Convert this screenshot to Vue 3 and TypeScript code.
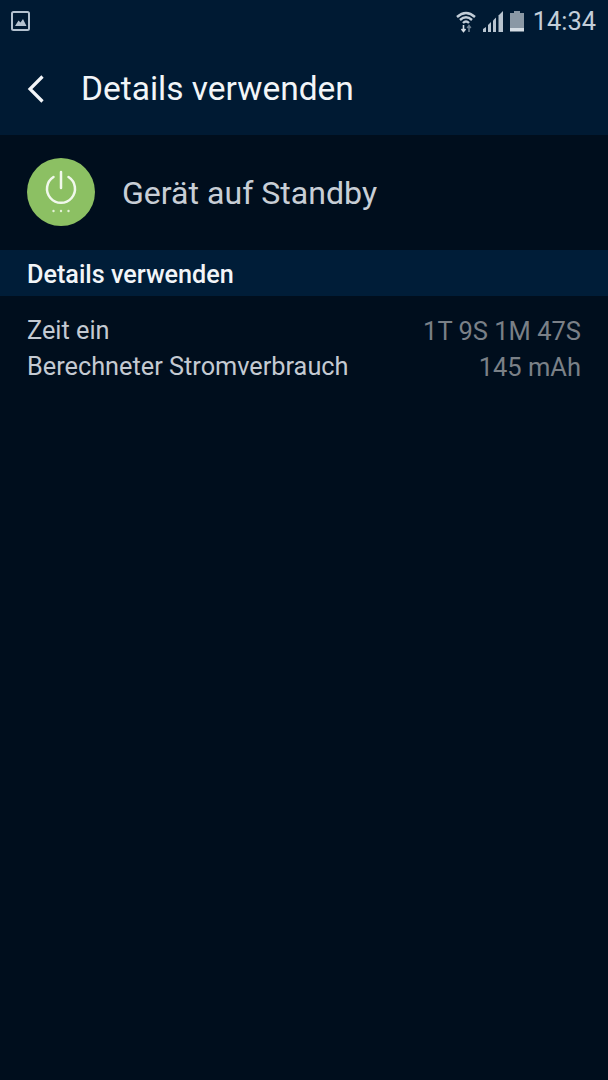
<script setup lang="ts">
const rows: { label: string; value: string }[] = [
  { label: 'Zeit ein', value: '1T 9S 1M 47S' },
  { label: 'Berechneter Stromverbrauch', value: '145 mAh' },
]
</script>

<template>
  <div class="page">
    <header class="top">
      <div class="status">
        <svg class="pic" width="20" height="21" viewBox="0 0 20 21">
          <rect x="1" y="1" width="17" height="18" rx="1.5" fill="none" stroke="#b4c2d0" stroke-width="2" />
          <path d="M4 15 L7.5 9.5 L9.5 11.5 L12 8 L15.500 15 Z" fill="#b4c2d0" />
        </svg>
        <div class="status-right">
          <svg width="22" height="24" viewBox="0 0 22 24">
            <path d="M2 8 Q11 0 20 8" fill="none" stroke="#c2cdd8" stroke-width="2.400" />
            <path d="M5 11 Q11 5.500 17 11" fill="none" stroke="#c2cdd8" stroke-width="2.400" />
            <path d="M8 14 Q11 11 14 14" fill="none" stroke="#c2cdd8" stroke-width="2.400" />
            <path d="M8.500 16 L8.500 22 M6.500 20 L8.500 22.500 L10.500 20" fill="none" stroke="#d4dce4" stroke-width="1.600" />
            <path d="M14 23 L14 17 M12.200 19 L14 16.500 L15.800 19" fill="none" stroke="#6d7f90" stroke-width="1.600" />
          </svg>
          <svg class="sig" width="21" height="22" viewBox="0 0 21 22">
            <path d="M0 19 L3 17 L3 22 L0 22 Z" fill="#b8c4d0" />
            <path d="M5 15 L8 12 L8 22 L5 22 Z" fill="#b8c4d0" />
            <path d="M10 10.500 L13 7.500 L13 22 L10 22 Z" fill="#b8c4d0" />
            <path d="M15.500 5.500 L20 1 L20 22 L15.500 22 Z" fill="#b8c4d0" />
          </svg>
          <svg class="bat" width="14" height="21" viewBox="0 0 14 21">
            <rect x="4" y="0" width="6" height="2" fill="#8a98a5" />
            <rect x="0" y="2" width="14" height="15" fill="#8a98a5" />
            <rect x="0" y="17" width="14" height="3.500" fill="#d5dde4" />
          </svg>
          <span class="time">14:34</span>
        </div>
      </div>
      <div class="bar">
        <svg class="back" width="20" height="30" viewBox="0 0 20 30">
          <path d="M17.500 2.500 L5 15 L17.500 27.500" fill="none" stroke="#f2f5f8" stroke-width="3.200" />
        </svg>
        <h1 class="title">Details verwenden</h1>
      </div>
    </header>

    <section class="app-row">
      <div class="circle">
        <svg width="36" height="44" viewBox="0 0 36 44">
          <path d="M10.500 7 A14 14 0 1 0 25.500 7" fill="none" stroke="#f1f8ec" stroke-width="2.500" stroke-linecap="round" />
          <path d="M18 2 L18 18" stroke="#f1f8ec" stroke-width="2.500" stroke-linecap="round" />
          <circle cx="10.500" cy="41" r="1.200" fill="#e4f2d8" />
          <circle cx="18" cy="41" r="1.200" fill="#e4f2d8" />
          <circle cx="25.500" cy="41" r="1.200" fill="#e4f2d8" />
        </svg>
      </div>
      <span class="app-name">Gerät auf Standby</span>
    </section>

    <h2 class="section">Details verwenden</h2>

    <div class="rows">
      <div v-for="row in rows" :key="row.label" class="row">
        <span class="label">{{ row.label }}</span>
        <span class="value">{{ row.value }}</span>
      </div>
    </div>
  </div>
</template>

<style>
html, body { margin: 0; background: #000e1d; }
</style>

<style scoped>
.page {
  width: 608px;
  height: 1080px;
  overflow: hidden;
  background: #000e1d;
  font-family: Roboto, "Liberation Sans", sans-serif;
}
.top {
  height: 135px;
  background: #001a33;
  display: flex;
  flex-direction: column;
}
.status {
  height: 42px;
  display: flex;
  align-items: center;
  justify-content: space-between;
  padding: 0 12px 0 11px;
}
.status-right {
  display: flex;
  align-items: center;
  gap: 5px;
}
.sig { margin-left: 1px; }
.bat { margin-left: 1px; }
.time {
  font-size: 25.400px;
  color: #c3ced9;
  margin-left: 4px;
}
.bar {
  flex: 1;
  display: flex;
  align-items: center;
  padding-left: 25px;
}
.back { margin-right: 36px; }
.title {
  margin: 0;
  font-size: 33.500px;
  font-weight: 400;
  color: #f2f5f8;
}
.app-row {
  height: 115px;
  box-sizing: border-box;
  display: flex;
  align-items: center;
  padding: 0 27px 2px;
  gap: 27px;
}
.circle {
  width: 68px;
  height: 68px;
  border-radius: 50%;
  background: #8cc063;
  display: flex;
  align-items: center;
  justify-content: center;
}
.app-name {
  font-size: 32.100px;
  color: #c8ced6;
  padding-top: 2px;
}
.section {
  margin: 0;
  height: 46px;
  line-height: 49px;
  padding-left: 27px;
  background: #001d38;
  color: #f2f5f8;
  font-size: 25.200px;
  font-weight: 500;
}
.rows { padding: 17px 27px 0; }
.row {
  display: flex;
  justify-content: space-between;
  height: 36px;
  line-height: 36px;
  font-size: 25.300px;
}
.label { color: #c4cad2; }
.value { color: #7a8087; font-size: 25.500px; }
</style>
